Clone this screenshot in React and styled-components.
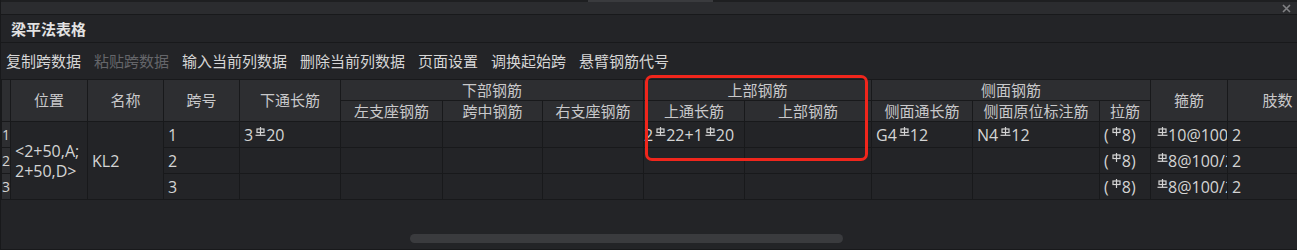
import React from 'react';
import styled, { createGlobalStyle } from 'styled-components';

const GlobalStyle = createGlobalStyle`
  html, body {
    margin: 0;
    padding: 0;
    background: #232427;
  }
  body {
    font-family: "Open Sans", "Noto Sans CJK SC", sans-serif;
    font-size: 15px;
    color: #d2d2d2;
  }
`;

const Panel = styled.div`
  width: 1297px;
  height: 250px;
  overflow: hidden;
  background: #232427;
  border-left: 1px solid #18191b;
  box-sizing: border-box;
  display: flex;
  flex-direction: column;
`;

const TopEdge = styled.div`
  height: 2px;
  background: #1e1f21;
  display: flex;
`;

const EdgeThumb = styled.div`
  margin-left: 587px;
  width: 125px;
  background: #3a3b3e;
`;

const Strip = styled.div`
  height: 12px;
  background: #2b2c2f;
  border-bottom: 1px solid #18191b;
  display: flex;
  justify-content: flex-end;
  align-items: center;
  padding-right: 6px;
`;

const TitleBar = styled.div`
  height: 27px;
  border-bottom: 1px solid #18191b;
  display: flex;
  align-items: center;
  padding-left: 10px;
  font-weight: bold;
  color: #e2e2e2;
`;

const Toolbar = styled.div`
  height: 36px;
  display: flex;
  align-items: center;
  gap: 13px;
  padding-left: 5px;
`;

const ToolItem = styled.span`
  color: ${p => (p.$disabled ? '#65666a' : '#d6d6d6')};
  white-space: nowrap;
  line-height: 1;
`;

const TableWrap = styled.div`
  position: relative;
  width: 1326px;
`;

const Grid = styled.table`
  border-collapse: collapse;
  table-layout: fixed;
  width: 1326px;
  border-top: 1px solid #18191b;
`;

const HeadCell = styled.th`
  background: #2d2e31;
  border: 1px solid #18191b;
  color: #c9c9cb;
  font-weight: normal;
  font-size: 15px;
  text-align: center;
  padding: 0;
  height: ${p => p.$h || 20}px;
  line-height: 1;
  overflow: hidden;
  white-space: nowrap;
`;

const Cell = styled.td`
  background: ${p => (p.$index ? '#2d2e31' : '#232427')};
  border: 1px solid #18191b;
  height: 25px;
  padding: 0 0 0 ${p => (p.$index ? 0 : 4)}px;
  vertical-align: middle;
  white-space: ${p => (p.$wrap ? 'normal' : 'nowrap')};
  overflow: hidden;
  text-overflow: clip;
  line-height: ${p => (p.$wrap ? '20px' : '1')};
  color: #d4d4d4;
  font-size: ${p => (p.$index ? 14 : 16)}px;
`;

const Mark = styled.svg`
  width: 11px;
  height: 9px;
  margin: 0 0 0 2px;
  vertical-align: 5px;
`;

const Highlight = styled.div`
  position: absolute;
  left: 644px;
  top: -4px;
  width: 223px;
  height: 86px;
  border: 3px solid #f0261c;
  border-radius: 7px;
  box-sizing: border-box;
  pointer-events: none;
`;

const Footer = styled.div`
  flex: 1;
  display: flex;
  align-items: flex-end;
  padding-bottom: 6px;
  border-bottom: 1px solid #18191b;
`;

const ScrollThumb = styled.div`
  margin-left: 409px;
  width: 433px;
  height: 9px;
  border-radius: 5px;
  background: #3a3b3e;
`;

// rebar grade marks: "hrb" has the extra bar underneath
const Rebar = ({ hrb = true }) => (
  <Mark viewBox="0 0 11 9">
    <g fill="none" stroke="#d4d4d4" strokeWidth="1.2">
      <rect x="2" y="2" width="7" height="3.5" />
      <line x1="5.5" y1="0" x2="5.5" y2={hrb ? 8 : 9} />
      {hrb && <line x1="0.5" y1="8.3" x2="10.5" y2="8.3" />}
    </g>
  </Mark>
);

const widths = [9, 77, 76, 76, 101, 102, 100, 101, 101, 127, 101, 127, 51, 77, 100];

const tools = [
  { label: '复制跨数据' },
  { label: '粘贴跨数据', disabled: true },
  { label: '输入当前列数据' },
  { label: '删除当前列数据' },
  { label: '页面设置' },
  { label: '调换起始跨' },
  { label: '悬臂钢筋代号' },
];

const rows = [
  { span: '1', bottom: <>3<Rebar />20</>, top: <>2<Rebar />22+1<Rebar />20</>, sideLong: <>G4<Rebar />12</>, sideIn: <>N4<Rebar />12</>, tie: <>(<Rebar hrb={false} />8)</>, stirrup: <><Rebar />10@100/200(2)</>, legs: '2' },
  { span: '2', tie: <>(<Rebar hrb={false} />8)</>, stirrup: <><Rebar />8@100/200(2)</>, legs: '2' },
  { span: '3', tie: <>(<Rebar hrb={false} />8)</>, stirrup: <><Rebar />8@100/200(2)</>, legs: '2' },
];

export default function App() {
  return (
    <>
      <GlobalStyle />
      <Panel>
        <TopEdge><EdgeThumb /></TopEdge>
        <Strip>
          <svg width="9" height="9" viewBox="0 0 9 9">
            <path d="M1 1L8 8M8 1L1 8" stroke="#808184" strokeWidth="1.6" />
          </svg>
        </Strip>
        <TitleBar>梁平法表格</TitleBar>
        <Toolbar>
          {tools.map(t => (
            <ToolItem key={t.label} $disabled={t.disabled}>{t.label}</ToolItem>
          ))}
        </Toolbar>
        <TableWrap>
          <Grid>
            <colgroup>
              {widths.map((w, i) => <col key={i} style={{ width: w }} />)}
            </colgroup>
            <thead>
              <tr>
                <HeadCell rowSpan={2} $h={20} />
                <HeadCell rowSpan={2}>位置</HeadCell>
                <HeadCell rowSpan={2}>名称</HeadCell>
                <HeadCell rowSpan={2}>跨号</HeadCell>
                <HeadCell rowSpan={2}>下通长筋</HeadCell>
                <HeadCell colSpan={3}>下部钢筋</HeadCell>
                <HeadCell colSpan={2}>上部钢筋</HeadCell>
                <HeadCell colSpan={3}>侧面钢筋</HeadCell>
                <HeadCell rowSpan={2}>箍筋</HeadCell>
                <HeadCell rowSpan={2}>肢数</HeadCell>
              </tr>
              <tr>
                <HeadCell $h={20}>左支座钢筋</HeadCell>
                <HeadCell>跨中钢筋</HeadCell>
                <HeadCell>右支座钢筋</HeadCell>
                <HeadCell>上通长筋</HeadCell>
                <HeadCell>上部钢筋</HeadCell>
                <HeadCell>侧面通长筋</HeadCell>
                <HeadCell>侧面原位标注筋</HeadCell>
                <HeadCell>拉筋</HeadCell>
              </tr>
            </thead>
            <tbody>
              {rows.map((r, i) => (
                <tr key={r.span}>
                  <Cell $index>{i + 1}</Cell>
                  {i === 0 && (
                    <>
                      <Cell rowSpan={3} $wrap>&lt;2+50,A; 2+50,D&gt;</Cell>
                      <Cell rowSpan={3}>KL2</Cell>
                    </>
                  )}
                  <Cell>{r.span}</Cell>
                  <Cell>{r.bottom}</Cell>
                  <Cell />
                  <Cell />
                  <Cell />
                  <Cell style={{ paddingLeft: 0 }}>{r.top}</Cell>
                  <Cell />
                  <Cell>{r.sideLong}</Cell>
                  <Cell>{r.sideIn}</Cell>
                  <Cell>{r.tie}</Cell>
                  <Cell>{r.stirrup}</Cell>
                  <Cell>{r.legs}</Cell>
                </tr>
              ))}
            </tbody>
          </Grid>
          <Highlight />
        </TableWrap>
        <Footer><ScrollThumb /></Footer>
      </Panel>
    </>
  );
}
